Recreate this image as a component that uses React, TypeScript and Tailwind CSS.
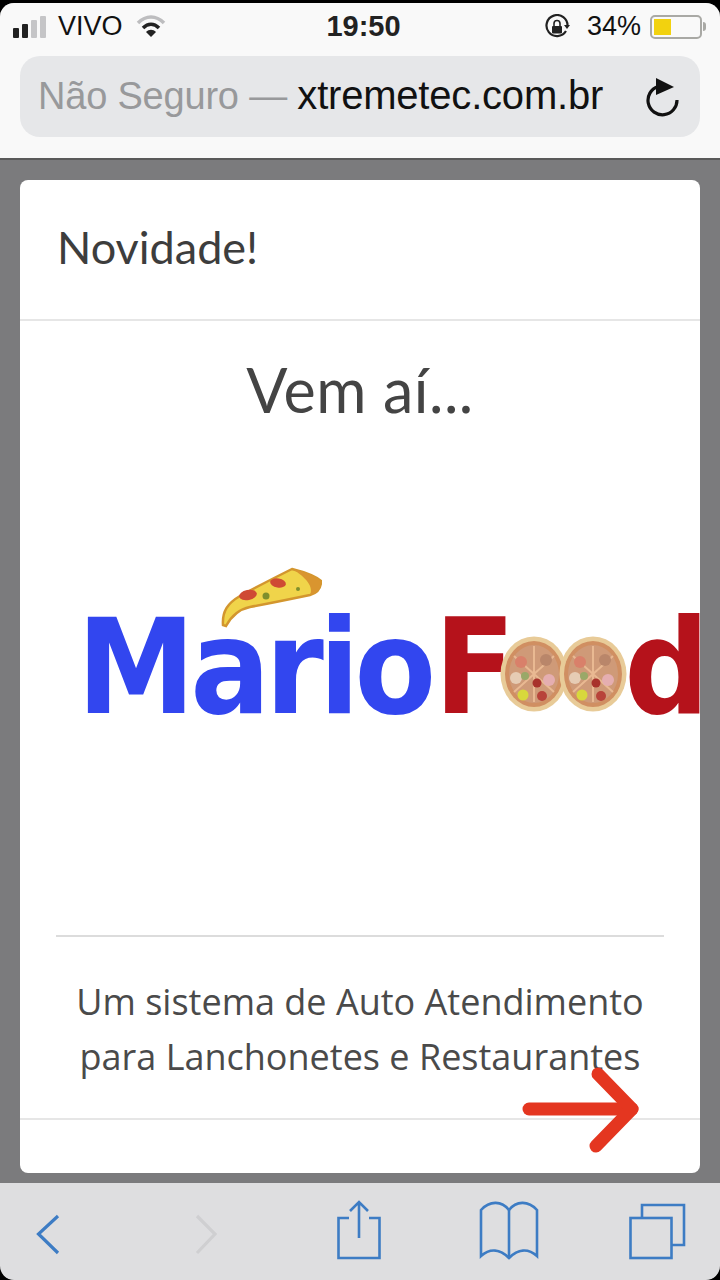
import React from "react";

const SANS = "font-['Liberation_Sans',Arial,sans-serif]";

function Pizza() {
  return (
    <svg viewBox="0 0 68 76" className="w-[68px] h-[76px] shrink-0">
      <ellipse cx="34" cy="38" rx="33.5" ry="37.5" fill="#e8cb98" />
      <ellipse cx="34" cy="38" rx="29" ry="33" fill="#d08f62" />
      <ellipse cx="34" cy="38" rx="25" ry="29" fill="#cf9a78" />
      <path d="M34 10 L34 66 M14 20 L54 56 M54 20 L14 56" stroke="#e9b992" strokeWidth="2" />
      <circle cx="21" cy="26" r="6" fill="#d9806a" />
      <circle cx="46" cy="24" r="6" fill="#b9866a" />
      <circle cx="16" cy="42" r="6" fill="#e6ccb4" />
      <circle cx="49" cy="44" r="6" fill="#e5aeb0" />
      <circle cx="37" cy="47" r="4.5" fill="#a8322c" />
      <circle cx="23" cy="59" r="5.5" fill="#d8d83c" />
      <circle cx="42" cy="60" r="5" fill="#b8433a" />
      <circle cx="25" cy="40" r="4" fill="#9aa868" />
    </svg>
  );
}

function Slice() {
  return (
    <svg viewBox="0 0 102 64" className="absolute left-[143px] top-[-34px] w-[102px] h-[64px]">
      <path d="M3 58 C2 44 8 36 20 29 C38 19 56 10 72 2 C84 5 94 8 101 14 C101 22 98 26 90 28 C66 33 46 37 30 40 C20 42 12 48 6 59 Z" fill="#f0d44a" stroke="#d3962e" strokeWidth="2.5" />
      <path d="M72 2 C84 5 94 8 101 14 C101 22 98 26 90 28 C94 20 86 10 72 2 Z" fill="#d9952f" />
      <ellipse cx="28" cy="28" rx="9" ry="5" fill="#cf4a34" transform="rotate(-12 28 28)" />
      <ellipse cx="58" cy="16" rx="8" ry="4.5" fill="#cf4a34" transform="rotate(10 58 16)" />
      <circle cx="46" cy="29" r="3.5" fill="#7f8f2c" />
      <circle cx="78" cy="22" r="2" fill="#7f8f2c" />
    </svg>
  );
}

function Logo() {
  return (
    <div className="relative flex items-center h-[134px] pl-[57px] whitespace-nowrap font-['DejaVu_Sans',sans-serif] font-stretch-condensed font-bold text-[132px] leading-none">
      <div className="relative text-[#3246ef] tracking-[-5px]">
        <Slice />
        Mario
      </div>
      <span className="ml-[3px] text-[#b5121b]">F</span>
      <div className="flex -ml-[15px] relative mt-[14px]">
        <Pizza />
        <div className="-ml-[9px]"><Pizza /></div>
      </div>
      <span className="-ml-[3px] text-[#b5121b]">d</span>
    </div>
  );
}

function StatusBar() {
  return (
    <div className={`flex items-center justify-between h-[47px] pl-[13px] pr-[14px] text-[#111] ${SANS}`}>
      <div className="flex items-center w-[200px]">
        <div className="flex items-end gap-[3px] h-[22px]">
          <div className="w-[6px] h-[10px] rounded-[1px] bg-[#222]" />
          <div className="w-[6px] h-[14px] rounded-[1px] bg-[#222]" />
          <div className="w-[6px] h-[18px] rounded-[1px] bg-[#c5c5c7]" />
          <div className="w-[6px] h-[22px] rounded-[1px] bg-[#c5c5c7]" />
        </div>
        <span className="ml-[12px] text-[27px] leading-none">VIVO</span>
        <svg viewBox="0 0 30 24" className="ml-[13px] w-[30px] h-[24px]" fill="none">
          <path d="M2 8 C10 0 20 0 28 8" stroke="#bdbdbf" strokeWidth="3.5" />
          <path d="M7 13 C12 8 18 8 23 13" stroke="#222" strokeWidth="3.5" />
          <path d="M15 22 L10 17 C13 14 17 14 20 17 Z" fill="#222" />
        </svg>
      </div>
      <span className="text-[29px] leading-none font-bold text-[#222] ml-[8px]">19:50</span>
      <div className="flex items-center justify-end w-[200px]">
        <svg viewBox="0 0 26 26" className="w-[26px] h-[26px]" fill="none">
          <path d="M22 17 A10.5 10.5 0 1 1 23.5 12" stroke="#222" strokeWidth="2.2" />
          <path d="M20 11 L26 11 L23 15 Z" fill="#222" />
          <rect x="8" y="12" width="10" height="7.5" rx="1" fill="#222" />
          <path d="M10 12 V9.5 a3 3 0 0 1 6 0 V12" stroke="#222" strokeWidth="1.6" />
        </svg>
        <span className="ml-[17px] text-[27px] leading-none">34%</span>
        <div className="flex items-center ml-[9px]">
          <div className="w-[52px] h-[24px] rounded-[5px] border-2 border-[#a9a9a5] p-[2px]">
            <div className="w-[17px] h-full bg-[#f2d20f]" />
          </div>
          <div className="w-[3px] h-[9px] ml-[1px] rounded-r-sm bg-[#a9a9a5]" />
        </div>
      </div>
    </div>
  );
}

function UrlBar() {
  return (
    <div className="mx-[20px] mt-[6px] h-[81px] rounded-[20px] bg-[#e6e7e9] flex items-center pl-[18px] pr-[20px] justify-between">
      <div className={`${SANS} leading-none tracking-[-0.2px] whitespace-nowrap -mt-[3px]`}>
        <span className="text-[#98999b] text-[38px]">Não Seguro — </span>
        <span className="text-[#111] text-[40px]">xtremetec.com.br</span>
      </div>
      <svg viewBox="0 0 36 40" className="w-[36px] h-[40px]" fill="none">
        <path d="M14 9.5 A14.5 14.5 0 1 0 33 23" stroke="#111" strokeWidth="3.2" />
        <path d="M12 1 L30 10 L12 18 Z" fill="#111" />
      </svg>
    </div>
  );
}

function Toolbar() {
  return (
    <div className="relative h-[97px] shrink-0 bg-[#dedee0] rounded-b-[14px]">
      <svg viewBox="0 0 720 97" className="w-[720px] h-[97px]" fill="none" stroke="#3d7cc4" strokeWidth="2.6">
        <path d="M58 33 L38.5 51 L58 70" strokeWidth="3.2" />
        <path d="M197 33 L215 51 L197 70" stroke="#cfcfd1" strokeWidth="3.2" />
        <path d="M349 35 H338.5 V75 H379.5 V35 H369" />
        <path d="M359 55 V20 M350 28 L359 19 L368 28" />
        <path d="M509 27 C502 18 490 17 481 27 V73 C490 65 500 66 509 75 C518 66 528 65 537 73 V27 C528 17 516 18 509 27 Z" />
        <path d="M509 27 V75" />
        <path d="M642 34 V22 H684 V62 H672" />
        <rect x="630.5" y="35" width="41" height="40" />
      </svg>
    </div>
  );
}

export default function App() {
  return (
    <div className="w-[720px] h-[1280px] bg-black pt-[3px] overflow-hidden">
      <div className="flex flex-col h-[1277px] rounded-[14px] overflow-hidden bg-[#7b7b7d]">
        <div className="h-[157px] shrink-0 bg-[#f9f9f9] border-b-2 border-[#5a5a5a]">
          <StatusBar />
          <UrlBar />
        </div>
        <div className="relative flex-1 px-[20px] pt-[20px] pb-[10px] overflow-hidden">
          <div className="h-full rounded-[8px] bg-white overflow-hidden flex flex-col">
            <div className="h-[141px] shrink-0 flex items-center px-[37px] pb-[4px] border-b-2 border-[#e6e6e6] font-['Lato',sans-serif] text-[45px] text-[#3d3d3d] leading-none">
              Novidade!
            </div>
            <div className="text-center font-['Lato',sans-serif] text-[61px] leading-none text-[#444] pt-[38px] h-[160px] shrink-0 tracking-[0.5px]">
              Vem aí...
            </div>
            <div className="shrink-0 mt-[119px]"><Logo /></div>
            <div className="mx-[36px] mt-[201px] border-t-2 border-[#dcdcdc] shrink-0" />
            <div className="shrink-0 h-[181px] pt-[37px] text-center font-['Open_Sans',sans-serif] text-[36px] leading-[55px] text-[#4a4a4a]">
              <p>Um sistema de Auto Atendimento</p>
              <p>para Lanchonetes e Restaurantes</p>
            </div>
            <div className="border-t-2 border-[#e6e6e6]" />
          </div>
          <svg viewBox="0 0 720 140" className="absolute left-0 top-[903px] w-[720px] h-[140px] pointer-events-none" fill="none" stroke="#e43620" strokeWidth="13" strokeLinecap="round" strokeLinejoin="round">
            <path d="M529 46 H632" />
            <path d="M598 11 L632 46 L596 83" />
          </svg>
        </div>
        <Toolbar />
      </div>
    </div>
  );
}
